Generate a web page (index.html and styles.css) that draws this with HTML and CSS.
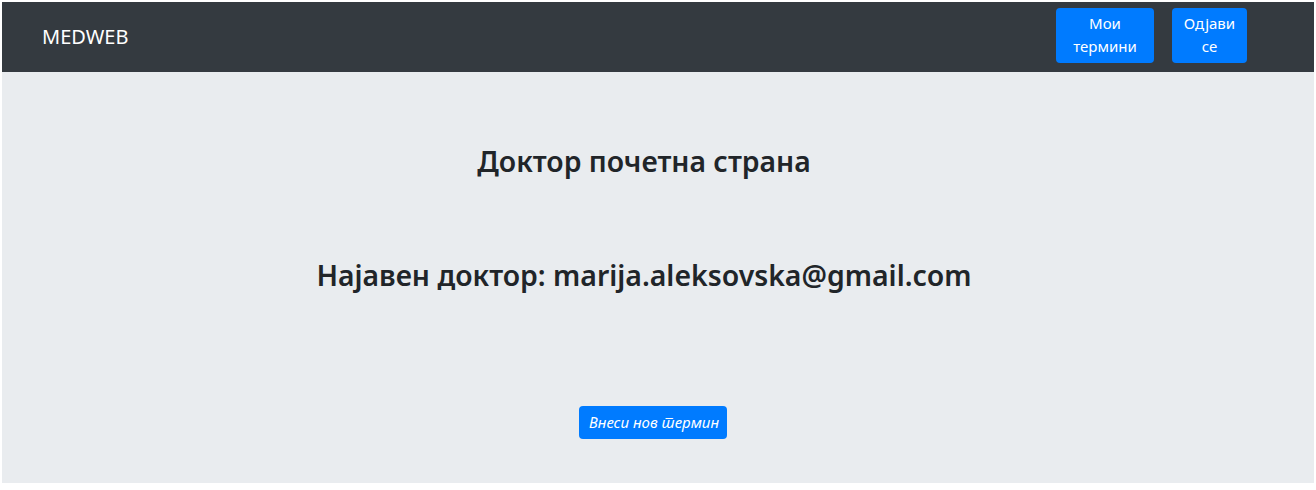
FILE: index.html
```html
<!DOCTYPE html>
<html lang="mk">
<head>
<meta charset="utf-8">
<title>MEDWEB</title>
<link rel="stylesheet" href="styles.css">
</head>
<body>
<div class="app">
  <header class="navbar">
    <span class="brand">MEDWEB</span>
    <nav class="nav-actions">
      <a class="btn btn-nav btn-wide" href="#">Мои термини</a>
      <a class="btn btn-nav btn-narrow" href="#">Одјави се</a>
    </nav>
  </header>
  <main class="main">
    <h2 class="title">Доктор почетна страна</h2>
    <h2 class="subtitle">Најавен доктор: marija.aleksovska@gmail.com</h2>
    <a class="btn btn-add" href="#">Внеси нов термин</a>
  </main>
</div>
</body>
</html>
```
FILE: styles.css
```css
* { box-sizing: border-box; }
html, body { background: #ffffff; }
body {
  margin: 2px;
  font-family: "Noto Sans", "Open Sans", "Liberation Sans", sans-serif;
  color: #212529;
}
.app {
  width: 1312px;
  display: flex;
  flex-direction: column;
}
.navbar {
  height: 70px;
  background: #343a40;
  display: flex;
  align-items: flex-start;
  padding: 6px 67px 0 40px;
}
.brand {
  color: #ffffff;
  font-size: 20px;
  line-height: 30px;
  margin-top: 14px;
  flex: 1;
}
.nav-actions {
  display: flex;
  gap: 18px;
  align-items: flex-start;
}
.btn {
  text-decoration: none;
  color: #ffffff;
  background: #007bff;
  border-radius: 4px;
  text-align: center;
  display: block;
}
.btn-nav {
  height: 55px;
  font-size: 15px;
  line-height: 23px;
  padding: 4px 6px;
}
.btn-wide { width: 98px; }
.btn-narrow { width: 75px; }
.main {
  height: 411px;
  background: #e9ecef;
  display: flex;
  flex-direction: column;
  align-items: center;
}
.title, .subtitle {
  margin: 0;
  padding-right: 28px;
  font-size: 28.4px;
  line-height: 34px;
  font-weight: 600;
}
.title { margin-top: 72px; }
.subtitle { margin-top: 80px; }
.btn-add {
  margin-top: 114px;
  margin-right: 10px;
  width: 148px;
  height: 33px;
  padding-left: 2px;
  font-size: 15px;
  line-height: 33px;
  font-style: italic;
}
```
